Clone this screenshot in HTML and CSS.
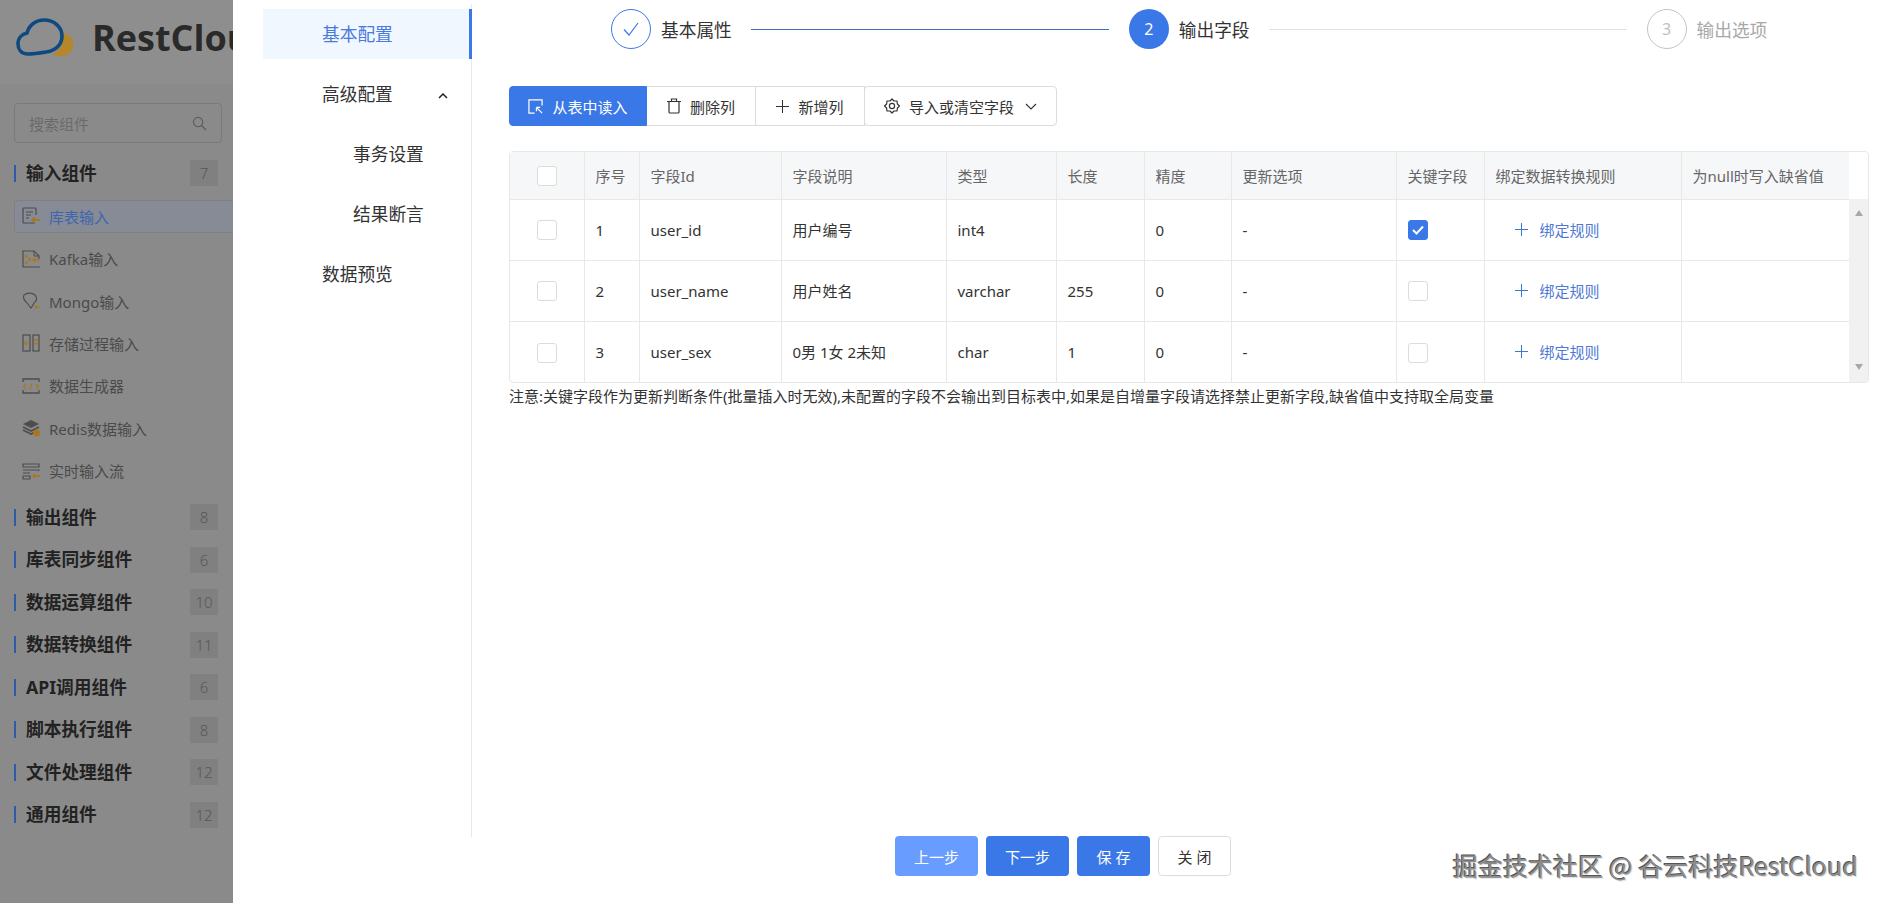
FILE: index.html
```html
<!DOCTYPE html>
<html lang="zh-CN">
<head>
    <meta charset="UTF-8">
    <title>RestCloud</title>
    <link rel="stylesheet" href="styles.css">
</head>
<body>
    <aside class="sidebar">
        <div class="logo">
            <svg class="logo-mark" viewBox="0 0 58 40" width="58" height="40">
                <path d="M36 37 C44 39 56 39 57 28 C58 20 53 16 47 15 C48 25 44 33 36 37 Z" fill="#b5862a"/>
                <path d="M12 36 C5 36 2 31 2 26 C2 20 6 16 11 15 C13 7 20 2 28 2 C38 2 46 9 46 18 C46 28 38 33 30 34 C24 35 18 36 12 36 Z" fill="none" stroke="#0e4a80" stroke-width="3.6"/>
            </svg>
            <span class="logo-text">RestCloud</span>
        </div>
        <div class="search">
            <span>搜索组件</span>
            <svg viewBox="0 0 16 16" width="15" height="15"><circle cx="6.5" cy="6.5" r="5" fill="none" stroke="#5c5c5c" stroke-width="1.2"/><path d="M10.2 10.2 L15 15" stroke="#5c5c5c" stroke-width="1.4"/></svg>
        </div>
        <div class="group first"><span class="group-name">输入组件</span><span class="badge">7</span></div>
        <div class="item active">
            <svg viewBox="0 0 18 18" width="18" height="18"><path d="M13 16 H2 a1 1 0 0 1 -1 -1 V2 a1 1 0 0 1 1 -1 H13 a1 1 0 0 1 1 1 V8" fill="none" stroke="#4d4d4d" stroke-width="1.2"/><path d="M4 5 H11 M4 8 H9 M4 11 H7" stroke="#4d4d4d" stroke-width="1.2"/><path d="M18 13 H10 M12.5 10.5 L10 13 L12.5 15.5" fill="none" stroke="#a9761c" stroke-width="1.5"/></svg>
            <span>库表输入</span>
        </div>
        <div class="item">
            <svg viewBox="0 0 18 18" width="18" height="18"><path d="M18 17 H1 V1 H12 L17 6 V9" fill="none" stroke="#4d4d4d" stroke-width="1.2"/><path d="M12 1 V6 H17" fill="none" stroke="#4d4d4d" stroke-width="1"/><circle cx="4" cy="6" r="1.3" fill="#a9761c"/><circle cx="4" cy="13" r="1.3" fill="#a9761c"/><circle cx="8" cy="9.5" r="1.3" fill="#a9761c"/><path d="M4 6 L8 9.5 L4 13" fill="none" stroke="#a9761c"/><path d="M17 10 H11 M13 8 L11 10 L13 12" fill="none" stroke="#a9761c" stroke-width="1.3"/></svg>
            <span>Kafka输入</span>
        </div>
        <div class="item">
            <svg viewBox="0 0 18 18" width="18" height="18"><path d="M2 3 C5 1 10 0 13 3 C16 6 14 10 12 11 C11 13 10 15 9 16 C7 14 6 11 4 10 C2 8 1 5 2 3 Z" fill="none" stroke="#4d4d4d" stroke-width="1.1"/><path d="M18 15 H13 M15 13.5 L13 15 L15 16.5" fill="none" stroke="#a9761c" stroke-width="1.2"/></svg>
            <span>Mongo输入</span>
        </div>
        <div class="item">
            <svg viewBox="0 0 18 18" width="18" height="18"><rect x="1" y="1" width="7" height="16" fill="none" stroke="#4d4d4d" stroke-width="1.2"/><rect x="11" y="1" width="6" height="16" fill="none" stroke="#4d4d4d" stroke-width="1.2"/><path d="M7 9 H2.5 M4.5 7 L2.5 9 L4.5 11" fill="none" stroke="#a9761c" stroke-width="1.2"/><path d="M12 6 H16 M12 9.5 H16" stroke="#a9761c" stroke-width="1.3"/></svg>
            <span>存储过程输入</span>
        </div>
        <div class="item">
            <svg viewBox="0 0 18 18" width="18" height="18"><path d="M1 5 V2 H17 V5 M1 13 V16 H17 V13" fill="none" stroke="#4d4d4d" stroke-width="1.3"/><path d="M4 7 L1.5 9.5 L4 12 M14 7 L16.5 9.5 L14 12 M10 6 L8 13" fill="none" stroke="#a9761c" stroke-width="1.2"/></svg>
            <span>数据生成器</span>
        </div>
        <div class="item">
            <svg viewBox="0 0 18 18" width="18" height="18"><path d="M1 5 L9 1 L17 5 L9 9 Z" fill="#4d4d4d"/><path d="M1 8 L9 12 L17 8 M1 11 L9 15 L13 13" fill="none" stroke="#4d4d4d" stroke-width="1.6"/><circle cx="14.5" cy="14" r="3.5" fill="#a9761c"/></svg>
            <span>Redis数据输入</span>
        </div>
        <div class="item">
            <svg viewBox="0 0 18 18" width="18" height="18"><path d="M1 2 H17 V5 H1 Z M1 8 H17 V9 M1 11 H8 M1 14 H8 V17 H1 Z" fill="none" stroke="#4d4d4d" stroke-width="1.2"/><path d="M18 14 H11 M13 12 L11 14 L13 16" fill="none" stroke="#a9761c" stroke-width="1.4"/></svg>
            <span>实时输入流</span>
        </div>
        <div class="group after-items"><span class="group-name">输出组件</span><span class="badge">8</span></div>
        <div class="group"><span class="group-name">库表同步组件</span><span class="badge">6</span></div>
        <div class="group"><span class="group-name">数据运算组件</span><span class="badge">10</span></div>
        <div class="group"><span class="group-name">数据转换组件</span><span class="badge">11</span></div>
        <div class="group"><span class="group-name">API调用组件</span><span class="badge">6</span></div>
        <div class="group"><span class="group-name">脚本执行组件</span><span class="badge">8</span></div>
        <div class="group"><span class="group-name">文件处理组件</span><span class="badge">12</span></div>
        <div class="group"><span class="group-name">通用组件</span><span class="badge">12</span></div>
    </aside>

    <section class="drawer">
        <div class="drawer-body">
            <nav class="nav">
                <div class="nav-item selected">基本配置</div>
                <div class="nav-item">高级配置
                    <svg class="nav-arrow" viewBox="0 0 10 6" width="10" height="6"><path d="M1 5 L5 1 L9 5" fill="none" stroke="#222" stroke-width="1.5"/></svg>
                </div>
                <div class="nav-item sub">事务设置</div>
                <div class="nav-item sub">结果断言</div>
                <div class="nav-item">数据预览</div>
            </nav>

            <main class="main">
                <div class="steps">
                    <div class="step-icon done">
                        <svg viewBox="0 0 18 18" width="18" height="18"><path d="M2 9.5 L7 15 L16 3" fill="none" stroke="#3b78e7" stroke-width="1.2"/></svg>
                    </div>
                    <span class="step-title">基本属性</span>
                    <span class="step-line done-line"></span>
                    <div class="step-icon current">2</div>
                    <span class="step-title">输出字段</span>
                    <span class="step-line"></span>
                    <div class="step-icon todo">3</div>
                    <span class="step-title todo-title">输出选项</span>
                </div>

                <div class="toolbar">
                    <button class="tool-btn primary">
                        <svg viewBox="0 0 16 16" width="15" height="15"><path d="M7 15 H1 V1 H15 V7" fill="none" stroke="#fff" stroke-width="1.3"/><path d="M9 9 L15 15 M9 9 H13 M9 9 V13" fill="none" stroke="#fff" stroke-width="1.3"/></svg>
                        从表中读入
                    </button>
                    <button class="tool-btn">
                        <svg viewBox="0 0 14 16" width="14" height="16"><path d="M0 3.5 H14 M4.5 3.5 V1 H9.5 V3.5 M2 3.5 V14 a1 1 0 0 0 1 1 H11 a1 1 0 0 0 1 -1 V3.5" fill="none" stroke="#333" stroke-width="1.2"/></svg>
                        删除列
                    </button>
                    <button class="tool-btn">
                        <svg viewBox="0 0 14 14" width="13" height="13"><path d="M7 0 V14 M0 7 H14" stroke="#333" stroke-width="1.1"/></svg>
                        新增列
                    </button>
                    <button class="tool-btn last">
                        <svg viewBox="0 0 16 16" width="16" height="16"><path d="M8 1 L10 3 L13 3 L13.4 6 L15.5 8 L13.4 10 L13 13 L10 13 L8 15 L6 13 L3 13 L2.6 10 L0.5 8 L2.6 6 L3 3 L6 3 Z" fill="none" stroke="#333" stroke-width="1.2" stroke-linejoin="round"/><circle cx="8" cy="8" r="2.6" fill="none" stroke="#333" stroke-width="1.2"/></svg>
                        导入或清空字段
                        <svg class="tool-caret" viewBox="0 0 12 7" width="12" height="7"><path d="M1 1 L6 6 L11 1" fill="none" stroke="#333" stroke-width="1.1"/></svg>
                    </button>
                </div>

                <div class="table-wrap">
                    <table class="fields">
                        <colgroup>
                            <col class="c-check"><col class="c-no"><col class="c-id"><col class="c-desc"><col class="c-type"><col class="c-len"><col class="c-prec"><col class="c-update"><col class="c-key"><col class="c-rule"><col class="c-null">
                        </colgroup>
                        <thead>
                            <tr>
                                <th class="center"><span class="check"></span></th>
                                <th>序号</th><th>字段Id</th><th>字段说明</th><th>类型</th><th>长度</th><th>精度</th><th>更新选项</th><th>关键字段</th><th>绑定数据转换规则</th><th>为null时写入缺省值</th>
                            </tr>
                        </thead>
                        <tbody>
                            <tr>
                                <td class="center"><span class="check"></span></td>
                                <td>1</td><td>user_id</td><td>用户编号</td><td>int4</td><td></td><td>0</td><td>-</td>
                                <td><span class="check checked"><svg viewBox="0 0 12 10" width="12" height="10"><path d="M1 5 L4.5 8.5 L11 1.5" fill="none" stroke="#fff" stroke-width="2"/></svg></span></td>
                                <td><span class="rule"><svg viewBox="0 0 14 14" width="13" height="13"><path d="M7 0 V14 M0 7 H14" stroke="#3b78d8" stroke-width="1.1"/></svg>绑定规则</span></td>
                                <td></td>
                            </tr>
                            <tr>
                                <td class="center"><span class="check"></span></td>
                                <td>2</td><td>user_name</td><td>用户姓名</td><td>varchar</td><td>255</td><td>0</td><td>-</td>
                                <td><span class="check"></span></td>
                                <td><span class="rule"><svg viewBox="0 0 14 14" width="13" height="13"><path d="M7 0 V14 M0 7 H14" stroke="#3b78d8" stroke-width="1.1"/></svg>绑定规则</span></td>
                                <td></td>
                            </tr>
                            <tr>
                                <td class="center"><span class="check"></span></td>
                                <td>3</td><td>user_sex</td><td>0男 1女 2未知</td><td>char</td><td>1</td><td>0</td><td>-</td>
                                <td><span class="check"></span></td>
                                <td><span class="rule"><svg viewBox="0 0 14 14" width="13" height="13"><path d="M7 0 V14 M0 7 H14" stroke="#3b78d8" stroke-width="1.1"/></svg>绑定规则</span></td>
                                <td></td>
                            </tr>
                        </tbody>
                    </table>
                    <div class="scroll-col">
                        <div class="scrollbar">
                            <span class="arrow-up"></span>
                            <span class="arrow-down"></span>
                        </div>
                    </div>
                </div>

                <p class="note">注意:关键字段作为更新判断条件(批量插入时无效),未配置的字段不会输出到目标表中,如果是自增量字段请选择禁止更新字段,缺省值中支持取全局变量</p>
            </main>
        </div>

        <footer class="drawer-foot">
            <button class="foot-btn light">上一步</button>
            <button class="foot-btn blue">下一步</button>
            <button class="foot-btn blue small">保 存</button>
            <button class="foot-btn plain small">关 闭</button>
        </footer>
    </section>

    <div class="watermark">掘金技术社区 @ 谷云科技RestCloud</div>
</body>
</html>
```

FILE: styles.css
```css
* {
    box-sizing: border-box;
}

html,
body {
    height: 100%;
}

body {
    margin: 0;
    display: flex;
    overflow: hidden;
    background-color: #fff;
    color: #2b2b2b;
    font-family: "Noto Sans", "Noto Sans CJK SC", sans-serif;
    font-size: 15px;
}

/* dimmed component list */
.sidebar {
    width: 233px;
    flex-shrink: 0;
    height: 903px;
    overflow: hidden;
    padding-left: 14px;
    background-color: #8a8a8a;
}

.logo {
    display: flex;
    align-items: center;
    height: 84px;
    margin: 0 0 0 -14px;
    padding: 0 0 9px 16px;
    background-color: #8e8e8e;
    overflow: hidden;
    white-space: nowrap;
}

.logo-mark {
    flex-shrink: 0;
}

.logo-text {
    margin-left: 18px;
    font-family: "Open Sans", sans-serif;
    font-size: 36px;
    font-weight: 700;
    color: #2a2a2a;
}

.search {
    display: flex;
    align-items: center;
    justify-content: space-between;
    width: 208px;
    height: 40px;
    margin-top: 19px;
    padding: 0 14px;
    border: 1px solid #7a7a7a;
    border-radius: 4px;
    color: #6a6a6a;
}

.group {
    display: flex;
    align-items: center;
    height: 42.5px;
}

.group.first {
    margin-top: 9px;
}

.group.after-items {
    margin-top: 4px;
}

.group-name {
    flex: 1;
    padding-left: 10px;
    font-size: 17.7px;
    font-weight: 700;
    line-height: 17px;
    color: #222;
    border-left: 2px solid #2f5aa8;
}

.badge {
    width: 28px;
    height: 26px;
    margin-right: 15px;
    background-color: #808080;
    color: #575757;
    font-size: 15px;
    font-weight: 300;
    line-height: 26px;
    text-align: center;
}

.item {
    display: flex;
    align-items: center;
    gap: 9px;
    height: 42.4px;
    padding-left: 8px;
    color: #4a4a4a;
    font-size: 15px;
}

.item.active {
    height: 33px;
    margin: 5px 0 5px;
    padding-left: 7px;
    border: 1px solid #7d8186;
    border-right: none;
    border-radius: 4px 0 0 4px;
    background-color: #868b95;
    color: #3f66ac;
}

/* drawer */
.drawer {
    flex: 1;
    height: 903px;
    display: flex;
    flex-direction: column;
    background-color: #fff;
}

.drawer-body {
    display: flex;
    height: 837px;
    padding-top: 4px;
}

.nav {
    width: 209px;
    margin-left: 30px;
    flex-shrink: 0;
    padding-top: 5px;
    border-right: 1px solid #e8e8e8;
}

.nav-item {
    position: relative;
    height: 50px;
    margin-bottom: 10px;
    padding-left: 59px;
    font-size: 17.7px;
    line-height: 50px;
    color: #333;
}

.nav-item.sub {
    padding-left: 90px;
}

.nav-item.selected {
    margin-right: -1px;
    background-color: #f1f7ff;
    border-right: 3px solid #3b78e7;
    color: #4a7bdc;
}

.nav-arrow {
    margin-left: 41px;
    vertical-align: 2px;
}

.main {
    flex: 1;
    min-width: 0;
    padding-left: 37px;
}

.steps {
    display: flex;
    align-items: center;
    height: 40px;
    margin-top: 5px;
    padding-left: 102px;
    font-size: 17.7px;
}

.step-icon {
    display: flex;
    align-items: center;
    justify-content: center;
    width: 40px;
    height: 40px;
    flex-shrink: 0;
    border-radius: 50%;
    font-size: 16px;
}

.step-icon.done {
    border: 1px solid #3b78e7;
}

.step-icon.current {
    background-color: #3b78e7;
    color: #fff;
}

.step-icon.todo {
    border: 1px solid #c4c4c4;
    color: #c0c0c0;
}

.step-title {
    margin-left: 10px;
    white-space: nowrap;
    color: #333;
}

.step-title.todo-title {
    color: #a8a8a8;
}

.step-line {
    width: 358px;
    height: 1px;
    margin: 0 20px 0 19px;
    background-color: #e0e0e0;
}

.step-line.done-line {
    background-color: #3a6fc8;
}

.toolbar {
    display: flex;
    margin-top: 37px;
}

.tool-btn {
    display: flex;
    align-items: center;
    justify-content: center;
    gap: 9px;
    width: 109px;
    height: 40px;
    padding: 0;
    border: 1px solid #dcdcdc;
    border-left: none;
    background-color: #fff;
    color: #333;
    font-family: inherit;
    font-size: 15px;
    white-space: nowrap;
}

.tool-btn.primary {
    width: 138px;
    border: 1px solid #3b78e7;
    border-radius: 4px 0 0 4px;
    background-color: #3b78e7;
    color: #fff;
}

.tool-btn.last {
    width: 193px;
    margin-left: -1px;
    border-left: 1px solid #dcdcdc;
    border-radius: 4px;
}

.tool-caret {
    margin-left: 2px;
}

.table-wrap {
    display: flex;
    width: 1360px;
    height: 232px;
    margin-top: 25px;
    border: 1px solid #e8e8e8;
    border-radius: 4px;
}

.fields {
    width: 1339px;
    flex-shrink: 0;
    table-layout: fixed;
    border-collapse: collapse;
}

.c-check { width: 74px; }
.c-no { width: 55px; }
.c-id { width: 142px; }
.c-desc { width: 165px; }
.c-type { width: 110px; }
.c-len { width: 88px; }
.c-prec { width: 87px; }
.c-update { width: 165px; }
.c-key { width: 88px; }
.c-rule { width: 197px; }
.c-null { width: 168px; }

.fields th,
.fields td {
    padding: 0 10px 0 11px;
    border-left: 1px solid #e8e8e8;
    text-align: left;
    white-space: nowrap;
    font-size: 15px;
    font-weight: 400;
}

.fields th:first-child,
.fields td:first-child {
    border-left: none;
}

.fields th {
    height: 47px;
    background-color: #f6f7f9;
    color: #666;
}

.fields td {
    height: 61px;
    border-top: 1px solid #e8e8e8;
    color: #333;
}

.fields .center {
    padding: 0;
    text-align: center;
    vertical-align: middle;
}

.check {
    display: inline-flex;
    align-items: center;
    justify-content: center;
    width: 20px;
    height: 20px;
    border: 1px solid #dcdcdc;
    border-radius: 3px;
    background-color: #fff;
    vertical-align: middle;
}

.check.checked {
    border-color: #3b78e7;
    background-color: #3b78e7;
}

.rule {
    display: inline-flex;
    align-items: center;
    gap: 12px;
    margin-left: 19px;
    color: #4f79d6;
}

.scroll-col {
    flex: 1;
    padding-top: 47px;
}

.scrollbar {
    display: flex;
    flex-direction: column;
    justify-content: space-between;
    align-items: center;
    height: 100%;
    padding: 11px 0 12px;
    background-color: #f1f1f1;
}

.arrow-up,
.arrow-down {
    width: 0;
    height: 0;
    border-left: 4.5px solid transparent;
    border-right: 4.5px solid transparent;
}

.arrow-up {
    border-bottom: 6px solid #a8a8a8;
}

.arrow-down {
    border-top: 6px solid #a8a8a8;
}

.note {
    margin: 2px 0 0;
    font-size: 15px;
    line-height: 22px;
    color: #333;
    white-space: nowrap;
}

/* bottom actions */
.drawer-foot {
    display: flex;
    justify-content: center;
    gap: 8px;
    margin-top: -1px;
    padding-left: 10px;
}

.foot-btn {
    width: 83px;
    height: 40px;
    padding: 0;
    border: none;
    border-radius: 4px;
    font-family: inherit;
    font-size: 15px;
    color: #fff;
}

.foot-btn.small {
    width: 73px;
}

.foot-btn.light {
    background-color: #699cff;
}

.foot-btn.blue {
    background-color: #3b78e7;
}

.foot-btn.plain {
    border: 1px solid #dcdcdc;
    background-color: #fff;
    color: #333;
}

/* site watermark over the drawer */
.watermark {
    position: absolute;
    right: 25px;
    top: 849px;
    font-family: "Noto Sans CJK SC", sans-serif;
    font-size: 25.1px;
    line-height: 32px;
    white-space: nowrap;
    color: #8c8c8c;
    text-shadow: -1px -1px 0 #555, 1px 1px 0 #e4e4e4;
}
```
